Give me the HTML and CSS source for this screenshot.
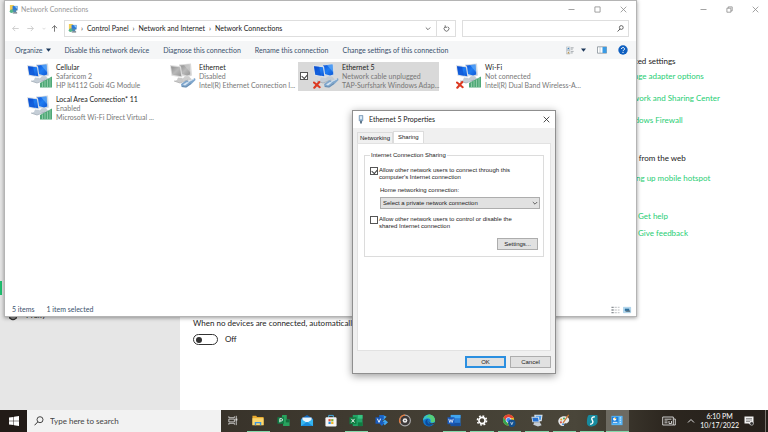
FILE: index.html
```html
<!DOCTYPE html>
<html lang="en">
<head>
<meta charset="utf-8">
<title>Network Connections</title>
<link rel="stylesheet" href="styles.css">
</head>
<body>
<svg class="defs" aria-hidden="true">
  <defs>
    <linearGradient id="screen" x1="0" y1="0" x2="1" y2="1">
      <stop offset="0" stop-color="#0a50d8"/><stop offset=".5" stop-color="#1f7df2"/><stop offset="1" stop-color="#1059d6"/>
    </linearGradient>
    <linearGradient id="screen-off" x1="0" y1="0" x2="1" y2="1">
      <stop offset="0" stop-color="#8d8d8d"/><stop offset=".5" stop-color="#b9b9b9"/><stop offset="1" stop-color="#969696"/>
    </linearGradient>
    <symbol id="pcs" viewBox="0 0 26 26">
      <path d="M9 2l12-1 1 12-5 2-8-3z" fill="#d3dbe3"/>
      <path d="M10 3l9.500-1 .8 10-3.300 1-7-2z" fill="url(#screen)"/>
      <path d="M14 2.600l5.500-.6.8 8z" fill="#6fb4f8" opacity=".6"/>
      <path d="M15 14l4 0 3 3-7 2-4-2z" fill="#c3ccd4"/>
      <path d="M0 2.500l11 1.300 1.500 11.200-11-1.800z" fill="#dbe2e9"/>
      <path d="M1 3.700l9 1 1.300 9-9-1.500z" fill="url(#screen)"/>
      <path d="M1 3.700l5 .6 2 9-5.700-1z" fill="#0846c8" opacity=".5"/>
      <path d="M8 15l4 .5 2 3-4 2-6-2 3-1z" fill="#c5ced7"/>
      <path d="M4 18.500l6 2 8-3" stroke="#9aa5b0" stroke-width=".7" fill="none"/>
    </symbol>
    <symbol id="pcs-off" viewBox="0 0 26 26">
      <path d="M9 2l12-1 1 12-5 2-8-3z" fill="#dadada"/>
      <path d="M10 3l9.500-1 .8 10-3.300 1-7-2z" fill="url(#screen-off)"/>
      <path d="M14 2.600l5.500-.6.8 8z" fill="#d2d2d2" opacity=".6"/>
      <path d="M15 14l4 0 3 3-7 2-4-2z" fill="#cecece"/>
      <path d="M0 2.500l11 1.300 1.500 11.200-11-1.800z" fill="#dedede"/>
      <path d="M1 3.700l9 1 1.300 9-9-1.500z" fill="url(#screen-off)"/>
      <path d="M8 15l4 .5 2 3-4 2-6-2 3-1z" fill="#c9c9c9"/>
      <path d="M4 18.500l6 2 8-3" stroke="#a8a8a8" stroke-width=".7" fill="none"/>
    </symbol>
    <symbol id="bars" viewBox="0 0 26 26">
      <path d="M13 25v-4.500l12-6.500v11z" fill="#4fa877"/>
      <path d="M15.500 24.500v-4.500M18 24.500v-6M20.500 24.500v-7.500M23 24.500v-9" stroke="#b5e2c8" stroke-width=".6"/>
    </symbol>
    <symbol id="plug" viewBox="0 0 26 26">
      <path d="M11 21.500l5-3.500 4 .5 5-3 .5 2-4 4-5 3.500-5-.5z" fill="#7fa6cc"/>
      <path d="M13 22l4-2.500 2 .5-4 3z" fill="#d5e4f2"/>
      <path d="M18 19.500l6-3" stroke="#d2e2f0" stroke-width="1"/>
      <path d="M12 24l4 .5 5-3.500" stroke="#5b7c9c" stroke-width=".6" fill="none"/>
    </symbol>
    <symbol id="cross" viewBox="0 0 26 26">
      <path d="M1 20l5.700 4.700M6.300 19.500l-5 5.700" stroke="#dc3a22" stroke-width="2.100" stroke-linecap="round"/>
    </symbol>
    <symbol id="net-folder" viewBox="0 0 10 10">
      <path d="M1 0h4l1 1h3v5H1z" fill="#f0cc55"/>
      <path d="M4 1h5.500v5H4z" fill="#2a78d8"/><path d="M6 1.500h3v3z" fill="#96cbf5"/>
      <path d="M3 5h5v3H3z" fill="#4b89b4"/>
      <circle cx="2.800" cy="7" r="2" fill="#57b58a"/><path d="M5 8h4v1.500H4z" fill="#66757f"/>
    </symbol>
    <symbol id="x" viewBox="0 0 7 7"><path d="M.7.7l5.600 5.600M6.300.7L.7 6.300" stroke="currentColor" stroke-width=".8"/></symbol>
    <symbol id="min" viewBox="0 0 7 7"><path d="M.5 3.500h6" stroke="currentColor" stroke-width=".8"/></symbol>
    <symbol id="max" viewBox="0 0 7 7"><path d="M.9.9h5.200v5.200H.9z" fill="none" stroke="currentColor" stroke-width=".8"/></symbol>
    <symbol id="restore" viewBox="0 0 7 7"><path d="M.9 2.200h4v4h-4zM2.200 2.200V.9h4v4H4.900" fill="none" stroke="currentColor" stroke-width=".8"/></symbol>
    <symbol id="down" viewBox="0 0 6 6"><path d="M.8 2l2.200 2.200L5.200 2" fill="none" stroke="currentColor" stroke-width=".9"/></symbol>
    <symbol id="left" viewBox="0 0 7 7"><path d="M6.700 3.500H.7M3.200.9L.7 3.500l2.500 2.600" fill="none" stroke="currentColor" stroke-width=".8"/></symbol>
  </defs>
</svg>

<div class="desktop">
  <div class="workspace">
    <section class="settings" aria-label="Settings">
      <nav class="settings-nav">
        <span class="accent"></span>
        <a href="#" class="proxy"><svg viewBox="0 0 10 10"><circle cx="5" cy="5" r="3.600" fill="none" stroke="#333" stroke-width="1.200"/><path d="M1 7h8" stroke="#333"/></svg>Proxy</a>
      </nav>
      <main class="settings-main">
        <label for="auto-off">When no devices are connected, automatically turn off mobile hotspot</label>
        <div class="toggle-row"><input type="checkbox" id="auto-off" class="toggle"><span>Off</span></div>
      </main>
      <aside class="related">
        <div class="controls settings-controls">
          <button aria-label="Minimize"><svg><use href="#min"/></svg></button>
          <button aria-label="Restore"><svg><use href="#restore"/></svg></button>
          <button aria-label="Close"><svg><use href="#x"/></svg></button>
        </div>
        <h2>Related settings</h2>
        <a href="#">Change adapter options</a>
        <a href="#">Network and Sharing Center</a>
        <a href="#">Windows Firewall</a>
        <h2 class="web">Help from the web</h2>
        <a href="#" class="hotspot">Setting up mobile hotspot</a>
        <a href="#" class="help">Get help</a>
        <a href="#" class="help feedback">Give feedback</a>
      </aside>
    </section>

    <section class="explorer" aria-label="Network Connections">
      <header class="titlebar">
        <svg class="app-icon"><use href="#net-folder"/></svg>
        <h1>Network Connections</h1>
        <div class="controls">
          <button aria-label="Minimize"><svg><use href="#min"/></svg></button>
          <button aria-label="Maximize"><svg><use href="#max"/></svg></button>
          <button aria-label="Close"><svg><use href="#x"/></svg></button>
        </div>
      </header>
      <div class="address-row">
        <div class="history">
          <button aria-label="Back"><svg><use href="#left"/></svg></button>
          <button aria-label="Forward"><svg class="flip"><use href="#left"/></svg></button>
          <button aria-label="Recent" class="recent"><svg><use href="#down"/></svg></button>
          <button aria-label="Up" class="up"><svg class="turn"><use href="#left"/></svg></button>
        </div>
        <div class="address">
          <svg class="app-icon"><use href="#net-folder"/></svg>
          <i>›</i><a href="#">Control Panel</a><i>›</i><a href="#">Network and Internet</a><i>›</i><a href="#">Network Connections</a>
          <button class="drop" aria-label="Previous locations"><svg><use href="#down"/></svg></button>
          <button class="refresh" aria-label="Refresh"><svg viewBox="0 0 7 7"><path d="M4.800 1.700a2.400 2.400 0 1 1-2.700.1M2.200.3v2h2" fill="none" stroke="#555" stroke-width=".8"/></svg></button>
        </div>
        <div class="search">
          <input type="search" aria-label="Search Network Connections">
          <svg viewBox="0 0 7 7"><circle cx="4.300" cy="2.500" r="1.900" fill="none" stroke="#444" stroke-width=".8"/><path d="M3 4L.6 6.500" stroke="#444" stroke-width=".9"/></svg>
        </div>
      </div>
      <div class="toolbar">
        <button>Organize <svg class="caret" viewBox="0 0 5 4"><path d="M0 .5h5L2.500 3.700z" fill="#1e395b"/></svg></button>
        <button>Disable this network device</button>
        <button>Diagnose this connection</button>
        <button>Rename this connection</button>
        <button>Change settings of this connection</button>
        <div class="view-tools">
          <button aria-label="Change your view"><svg class="view" viewBox="0 0 10 9"><path d="M.5.500h4v3.700h-4zM.5 4.700h4v3.700h-4z" fill="#e9edf0" stroke="#a3a9ae" stroke-width=".5"/><path d="M1 3l2-1.700 1 1.700z" fill="#3f7fb5"/><path d="M1.500 7.700l1-2 1.500 2z" fill="#b88a3e"/><path d="M5.500 1.500h3M5.500 3h2M5.500 5.500h3M5.500 7.200h2" stroke="#7b8389" stroke-width=".7"/></svg><svg class="caret" viewBox="0 0 5 4"><path d="M0 .5h5L2.500 3.700z" fill="#1e395b"/></svg></button>
          <button aria-label="Preview pane"><svg class="pane" viewBox="0 0 10 8"><path d="M.5.800h9v6.400h-9z" fill="#fff" stroke="#77828b" stroke-width=".7"/><path d="M5.500 1h4v6h-4z" fill="#3a9be5"/><path d="M3 1v6" stroke="#9eb0bd" stroke-width=".6"/></svg></button>
          <button aria-label="Help"><svg class="helpmark" viewBox="0 0 10 10"><circle cx="5" cy="5" r="4.700" fill="#0e5fc0"/><path d="M3.500 4a1.500 1.400 0 1 1 2.300 1.100Q5 5.500 5 6.200M5 7v1" fill="none" stroke="#fff"/></svg></button>
        </div>
      </div>
      <div class="tiles">
        <article class="tile"><svg class="net"><use href="#pcs"/><use href="#bars"/></svg><div><b>Cellular</b><span>Safaricom 2</span><span>HP lt4112 Gobi 4G Module</span></div></article>
        <article class="tile"><svg class="net"><use href="#pcs-off"/><use href="#plug"/></svg><div><b>Ethernet</b><span>Disabled</span><span>Intel(R) Ethernet Connection I...</span></div></article>
        <article class="tile selected"><input type="checkbox" class="box pick" aria-label="Select Ethernet 5" checked><svg class="net"><use href="#pcs"/><use href="#plug"/><use href="#cross"/></svg><div><b>Ethernet 5</b><span>Network cable unplugged</span><span>TAP-Surfshark Windows Adap...</span></div></article>
        <article class="tile"><svg class="net"><use href="#pcs"/><use href="#bars"/><use href="#cross"/></svg><div><b>Wi-Fi</b><span>Not connected</span><span>Intel(R) Dual Band Wireless-A...</span></div></article>
        <article class="tile"><svg class="net"><use href="#pcs"/><use href="#bars"/></svg><div><b>Local Area Connection* 11</b><span>Enabled</span><span>Microsoft Wi-Fi Direct Virtual ...</span></div></article>
      </div>
      <footer class="status">
        <span>5 items</span><span>1 item selected</span>
        <div class="layouts">
          <svg viewBox="0 0 10 8"><path d="M.5 1h2.500M.5 4h2.500M.5 7h2.500" stroke="#8d9296" stroke-width="1.400"/><path d="M4 1h2.500M4 4h2.500M4 7h2.500M7.500 1H9.500M7.500 4H9.500M7.500 7H9.500" stroke="#a4a9ad" stroke-width=".8"/></svg>
          <svg viewBox="0 0 10 8"><path d="M.5 1h8v6h-8z" fill="#b9dcf2" stroke="#8cbfde" stroke-width=".6"/><path d="M2 2.500h5v2.500H2z" fill="#2b6f9e"/><path d="M5 4.500h3V6H2z" fill="#52636e"/></svg>
        </div>
      </footer>
    </section>

    <section class="dialog" role="dialog" aria-label="Ethernet 5 Properties">
      <header class="dialog-title">
        <svg viewBox="0 0 6 10"><path d="M1 .5h4v6H1z" fill="#9fc0dc" stroke="#56789a" stroke-width=".6"/><path d="M2 1.500h2v3H2z" fill="#e5f1fa"/><path d="M2 6.500h2v3H2z" fill="#526b80"/></svg>
        <h1>Ethernet 5 Properties</h1>
        <button aria-label="Close"><svg><use href="#x"/></svg></button>
      </header>
      <div class="tabs" role="tablist">
        <button role="tab">Networking</button><button role="tab" class="active" aria-selected="true">Sharing</button>
      </div>
      <div class="panel">
        <fieldset>
          <legend>Internet Connection Sharing</legend>
          <div class="option"><input type="checkbox" class="box" id="share" checked><label for="share">Allow other network users to connect through this<br>computer's Internet connection</label></div>
          <label class="home" for="home">Home networking connection:</label>
          <div class="select"><select id="home"><option>Select a private network connection</option></select><svg><use href="#down"/></svg></div>
          <div class="option"><input type="checkbox" class="box" id="control"><label for="control">Allow other network users to control or disable the<br>shared Internet connection</label></div>
          <button class="btn more">Settings...</button>
        </fieldset>
      </div>
      <div class="actions"><button class="btn default">OK</button><button class="btn">Cancel</button></div>
    </section>
  </div>

  <footer class="taskbar">
    <button class="start" aria-label="Start"><svg viewBox="0 0 10 10"><path d="M0 1.500l4.500-.6v3.800H0zM5 .8L10 0v4.700H5zM0 5.200h4.500V9L0 8.400zM5 5.200h5V10l-5-.8z" fill="#fff"/></svg></button>
    <label class="finder"><svg viewBox="0 0 10 10"><circle cx="6" cy="3.700" r="3" fill="none" stroke="#333" stroke-width=".9"/><path d="M3.800 5.900L.5 9.300" stroke="#333"/></svg><input type="text" placeholder="Type here to search" aria-label="Type here to search"></label>
    <div class="apps">
      <button aria-label="Task View"><svg viewBox="0 0 14 14"><path d="M2.500 2.500V4h6V2.500M2.500 5.500h6v3h-6zM2.500 11.500V10h6v1.500M10.500 2v10" fill="none" stroke="#ddd" stroke-width=".9"/><path d="M9.700 5h2v2h-2z" fill="#ddd"/></svg></button>
      <button class="open" aria-label="File Explorer"><svg viewBox="0 0 14 14"><path d="M1 2h4l1 1.300h7V12H1z" fill="#e8a92f"/><path d="M1 4.500h12V12H1z" fill="#fbd66d"/><path d="M3.500 12V8.500h7V12H9V10H5v2z" fill="#3d94dc"/></svg></button>
      <button aria-label="Project"><svg viewBox="0 0 14 14"><path d="M5 1h5v5h3v7H6V9H4z" fill="#28a25e"/><path d="M9 6h4v3H9z" fill="#156b3c"/><path d="M0 3.500h7v7H0z" fill="#117c45"/><path d="M2.500 9V5h1.700a1.200 1.200 0 0 1 0 2.500H2.500" fill="none" stroke="#fff" stroke-width=".9"/></svg></button>
      <button aria-label="Mail"><svg viewBox="0 0 14 14"><path d="M.5 5L7 1l6.500 4v8H.5z" fill="#1269bd"/><path d="M2 3.800h10V9H2z" fill="#e5f5ff"/><path d="M.5 5.500L7 9.500l6.500-4V13H.5z" fill="#35b5ef"/><path d="M.5 13L7 8.500l6.500 4.500z" fill="#188bdc"/></svg></button>
      <button aria-label="Microsoft Store"><svg viewBox="0 0 14 14"><path d="M4.500 4V1.500h5V4" fill="none" stroke="#48b4ed"/><rect x="1" y="3.500" width="12" height="10" rx="1.300" fill="#f5f5f5"/><path d="M4.300 5.500h2.400v2.400H4.300z" fill="#e84a32"/><path d="M7.200 5.500h2.400v2.400H7.200z" fill="#79b532"/><path d="M4.300 8.400h2.400v2.400H4.300z" fill="#2a94e5"/><path d="M7.200 8.400h2.400v2.400H7.200z" fill="#f6b520"/></svg></button>
      <button class="open" aria-label="Excel"><svg viewBox="0 0 14 14"><path d="M3.500 1H14v12H3.500z" fill="#21a366"/><path d="M9 1h5v4H9z" fill="#37c481"/><path d="M9 9h5v4H9z" fill="#107c41"/><path d="M0 3.500h7.500v7.500H0z" fill="#107c41"/><path d="M2 5.200l3.500 4M5.500 5.200L2 9.200" stroke="#fff"/></svg></button>
      <button aria-label="Visio"><svg viewBox="0 0 14 14"><path d="M8 1l4 2-4 4-3-3zM10 6l3.500 3-3.500 3-3-3z" fill="#41a5ed"/><path d="M4 1h5v5H4zM6 8l4 1-3 4-3-3z" fill="#1b66c8"/><path d="M0 3.500h7.500v7H0z" fill="#185abd"/><path d="M2 5l1.800 4L5.500 5" fill="none" stroke="#fff"/></svg></button>
      <button aria-label="Music"><svg viewBox="0 0 14 14"><circle cx="7" cy="7" r="5.800" fill="#3b3838" stroke="#aaa" stroke-width="1.200"/><path d="M7 1.200A5.800 5.800 0 0 0 2 10" fill="none" stroke="#e2793c" stroke-width="1.200"/><circle cx="7" cy="7" r="2.500" fill="#eee"/><circle cx="7" cy="7" r=".8" fill="#444"/></svg></button>
      <button aria-label="Edge"><svg viewBox="0 0 14 14"><circle cx="7" cy="7" r="6.500" fill="#1379ce"/><path d="M.5 7A6.500 6.500 0 0 1 13.500 7c0 2.500-4 3-5 1.500C10 5 5 3 .5 7z" fill="#38c4c5"/><path d="M7 .5c4 0 6.500 3 6.500 6.500 0 2-3 2.500-4.500 1.500C10 5 8 3 4 3.500z" fill="#56cf77"/><path d="M6 5.500C4 8 6 12 11 11c-3 3-8 2-8-2 0-2 1.500-3.200 3-3.500z" fill="#0c4a9c"/><path d="M7 6c-1 1.500 0 4 3 4.300l3-1-.7 1.600C8 12 5.500 9 7 6z" fill="#3d3930"/></svg></button>
      <button class="open" aria-label="Word"><svg viewBox="0 0 14 14"><path d="M3.500 1H14v12H3.500z" fill="#2b7cd3"/><path d="M3.500 1H14v3.500H3.500z" fill="#41a5ee"/><path d="M3.500 9.500H14V13H3.500z" fill="#174f9e"/><path d="M0 3.500h7.500v7.500H0z" fill="#185abd"/><path d="M1.300 5.200l1.200 4L3.700 6l1.300 3.200 1.200-4" fill="none" stroke="#fff" stroke-width=".8"/></svg></button>
      <button class="open" aria-label="Settings"><svg viewBox="0 0 14 14"><circle cx="7" cy="7" r="3.300" fill="none" stroke="#fff" stroke-width="1.800"/><circle cx="7" cy="7" r="4.900" fill="none" stroke="#fff" stroke-width="1.700" stroke-dasharray="1.920 1.920"/></svg></button>
      <button class="open" aria-label="Chrome"><svg viewBox="0 0 14 14"><circle cx="6.500" cy="6.500" r="6" fill="#f5c52c"/><path d="M1.200 3.700A6 6 0 0 1 12 4.200H6.500L4 8z" fill="#e54335"/><path d="M1.200 3.700L5 9l1.500 3.500A6 6 0 0 1 1.200 3.700z" fill="#34a353"/><circle cx="6.500" cy="6.500" r="2.700" fill="#4285f4" stroke="#fff" stroke-width=".7"/><circle cx="10" cy="10" r="4" fill="#12508f"/><path d="M8.700 8.500L10 11.500l1.300-3" fill="none" stroke="#fff" stroke-width=".7"/></svg></button>
      <button class="open" aria-label="Network"><svg viewBox="0 0 14 14"><path d="M4 .8h9l-1 7H5z" fill="#dce6ef"/><path d="M5.500 2h6.200l-.7 4.500H6z" fill="#4898e8"/><path d="M1 3h8l1 6H2z" fill="#d0dde8"/><path d="M2 4h6l.8 4H2.800z" fill="#2670cf"/><path d="M4 9h6l2 3-4 1.500-5-2z" fill="#c5ced6"/></svg></button>
      <button class="open" aria-label="Paint"><svg viewBox="0 0 14 14"><path d="M1 9C0 5 4 2 8 2.500s6 4 3.500 6.500-3 0-4 1.500.5 2.500-2 2.500S1.500 11 1 9z" fill="#e7e9eb"/><circle cx="4" cy="6" r="1.100" fill="#e9a42b"/><circle cx="7" cy="4.800" r="1.100" fill="#41a75c"/><circle cx="3.700" cy="9" r="1.100" fill="#d44b42"/><circle cx="6" cy="11" r="1" fill="#377fd1"/><path d="M6 9.500L12 1" stroke="#cf7833" stroke-width="1.300"/></svg></button>
      <button class="open" aria-label="Surfshark"><svg viewBox="0 0 14 14"><path d="M4 1h8q1 0 1 1v6c0 4-5 5.500-7 5.500-3 0-4.500-1.500-4.500-4C1.500 6 2 1 4 1z" fill="#178a9e"/><path d="M10 3C6.500 3 6 5 7.500 7S7 11 5 11" fill="none" stroke="#fff" stroke-width="1.500"/></svg></button>
      <button class="open current" aria-label="Control Panel"><svg viewBox="0 0 14 14"><path d="M1 2h12v10H1z" fill="#58b6f6"/><path d="M1.500 3h7v7h-7z" fill="#1c7fdd"/><circle cx="4.500" cy="5.500" r="1.800" fill="#fff"/><path d="M4.500 5.500V3.700a1.800 1.800 0 0 1 1.800 1.800z" fill="#f8b62b"/><path d="M2.500 9h5" stroke="#fff"/><path d="M10.500 3.500v7" stroke="#dff2ff" stroke-dasharray="1.500 1"/></svg></button>
    </div>
    <div class="tray">
      <button aria-label="Touch keyboard"><svg class="keys" viewBox="0 0 14 10"><path d="M.7 1h10.600v8H.7zM11.300 3h2v6h-2" fill="none" stroke="#ddd" stroke-width=".9"/><path d="M2.500 3.200h7M2.500 6.800h3M7 5v2.500h2.500V5M2.500 5h3" stroke="#ddd" stroke-width=".9" fill="none"/></svg></button>
      <button aria-label="Show hidden icons"><svg class="chev" viewBox="0 0 8 6"><path d="M1 4.500l3-3 3 3" fill="none" stroke="#ddd"/></svg></button>
      <time datetime="2022-10-17T18:10"><span>6:10 PM</span><span>10/17/2022</span></time>
      <button aria-label="Notifications"><svg class="note" viewBox="0 0 10 10"><path d="M.5.500h9v7H7V9L4.500 7.500h-4z" fill="#f1f1f1"/><path d="M2 2.500h6M2 4h6M2 5.500h4" stroke="#555" stroke-width=".6"/><circle cx="7.700" cy="7.500" r="1.800" fill="#333" stroke="#ddd" stroke-width=".6"/></svg></button>
      <span class="peek"></span>
    </div>
  </footer>
</div>
</body>
</html>
```

FILE: styles.css
```css
* { box-sizing: border-box; }
body { margin: 0; font: 7px/9px Lato, "Open Sans", sans-serif; color: #222; }
button, input, select { font: inherit; color: inherit; }
button { display: flex; align-items: center; justify-content: center; margin: 0; padding: 0; border: 0; background: none; white-space: nowrap; }
a { color: inherit; text-decoration: none; }
h1, h2 { margin: 0; font-size: inherit; font-weight: 400; }
svg { display: block; flex: none; width: 7px; height: 7px; }
.defs { position: absolute; width: 0; height: 0; }
.desktop { display: grid; grid-template-rows: 1fr 22px; height: 100vh; overflow: hidden; }
.workspace { position: relative; overflow: hidden; }

/* Settings window at the back */
.settings { display: grid; grid-template-columns: 180px 1fr 148px; height: 100%; background: #fff; font: 8px/11px Lato, sans-serif; }
.settings-nav { padding-top: 281px; background: #e6e6e6; }
.accent { display: block; width: 2px; height: 14px; background: #1fc070; }
.proxy { display: flex; align-items: center; gap: 8px; margin-top: 15px; padding-left: 8px; }
.proxy svg { width: 10px; height: 10px; }
.settings-main { padding: 318px 0 0 13px; white-space: nowrap; }
.toggle-row { display: flex; align-items: center; gap: 7px; margin-top: 5px; }
.toggle { appearance: none; display: flex; align-items: center; width: 25px; height: 11px; margin: 0; padding-left: 2px; border: 1px solid #333; border-radius: 6px; }
.toggle::before { content: ""; width: 6px; height: 6px; border-radius: 50%; background: #333; }
.related { display: flex; flex-direction: column; white-space: nowrap; }
.related a { margin-bottom: 11px; color: #1fce74; }
.related h2 { margin: 38px 0 4px; }
.related h2.web { margin: 16px 0 9px; }
.related .hotspot { margin-bottom: 27px; }
.related .help { margin-bottom: 6px; padding-left: 18px; }
.controls { display: flex; color: #8c8c8c; }
.controls button { width: 26px; height: 18px; }
.settings-controls { align-self: flex-end; }

/* Explorer window */
.explorer { position: absolute; top: 0; left: 4px; display: flex; flex-direction: column; width: 633px; height: 317px; border: 1px solid #b4b4b4; background: #fff; box-shadow: 0 1px 4px #0006; }
.titlebar { display: flex; align-items: center; height: 17px; padding-left: 4px; color: #999; }
.titlebar h1 { margin: 0 auto 0 3px; }
.app-icon { width: 9px; height: 9px; }
.address-row { display: flex; gap: 6px; margin: 2px 7px 4px 0; height: 17px; }
.history { display: flex; align-items: center; width: 53px; padding-left: 6px; color: #c5c5c5; }
.history button { width: 17px; justify-content: start; padding-left: 1px; }
.history .recent { width: 12px; }
.history .recent svg { width: 4px; }
.history .up { width: 7px; padding: 0; color: #555; }
.flip { transform: scaleX(-1); }
.turn { transform: rotate(90deg); }
.address { display: flex; align-items: center; width: 392px; padding-left: 3px; border: 1px solid #dedede; color: #222; }
.address i { width: 10px; text-align: center; font-style: normal; }
.address .drop { width: 18px; height: 100%; margin-left: auto; border-right: 1px solid #dedede; color: #666; }
.address .refresh { width: 18px; height: 100%; }
.address .drop svg { width: 6px; }
.search { display: flex; flex: 1; align-items: center; padding-right: 4px; border: 1px solid #dedede; }
.search input { flex: 1; min-width: 0; height: 100%; padding: 0 4px; border: 0; background: none; outline: 0; appearance: none; }
.toolbar { display: flex; align-items: center; gap: 14px; height: 18px; padding: 0 8px 0 10px; background: #f5f6f7; color: #39506c; }
.caret { width: 5px; height: 4px; margin-left: 3px; }
.view-tools { display: flex; gap: 11px; margin-left: auto; }
.view-tools .view { width: 9px; height: 9px; }
.view-tools .caret { margin-left: 6px; }
.pane { width: 10px; height: 8px; }
.helpmark { width: 10px; height: 10px; }
.tiles { display: grid; flex: 1; grid-template-columns: repeat(4, 141px); grid-auto-rows: 29px; align-content: start; gap: 3px 2px; padding: 3px 7px; }
.tile { position: relative; display: flex; gap: 3px; padding-left: 15px; color: #777; }
.tile > div { padding-top: 1px; }
.tile b, .tile span { display: block; font-weight: 400; white-space: nowrap; }
.tile b { color: #222; }
.tile.selected { background: #d9d9d9; }
.net { width: 26px; height: 27px; }
.box { appearance: none; flex: none; display: flex; width: 8px; height: 8px; margin: 0; border: 1px solid #555; background: #fff; }
.box:checked::before { content: ""; width: 5px; height: 3px; margin: 1px 0 0 1px; border: solid #444; border-width: 0 0 1px 1px; transform: rotate(-48deg); }
.pick { position: absolute; left: 2px; top: 10px; }
.status { display: flex; align-items: center; height: 13px; padding: 0 4px 0 7px; gap: 12px; color: #39506c; }
.layouts { display: flex; gap: 3px; margin-left: auto; }
.layouts svg { width: 9px; height: 8px; }

/* Properties dialog */
.dialog { position: absolute; left: 352px; top: 110px; display: flex; flex-direction: column; width: 204px; height: 264px; border: 1px solid #8f8f8f; background: #f0f0f0; box-shadow: 0 2px 8px #0006; font: 6px/7px "Liberation Sans", Arial, sans-serif; }
.dialog-title { display: flex; align-items: center; height: 17px; padding: 0 5px; background: #fff; font: 7px/9px Lato, sans-serif; }
.dialog-title > svg { width: 6px; height: 9px; }
.dialog-title h1 { margin: 0 auto 0 5px; }
.tabs { display: flex; align-items: flex-end; height: 15px; padding: 0 4px; }
.tabs button { height: 11px; padding: 0 2px; border: 1px solid #dcdcdc; border-bottom: 0; }
.tabs .active { height: 12px; padding: 0 4px; background: #fff; }
.panel { flex: 1; margin: 0 4px; padding: 8px 6px; border: 1px solid #e2e2e2; background: #fff; }
fieldset { min-width: 0; margin: 0; padding: 8px 3px 6px 5px; border: 1px solid #dcdcdc; }
legend { margin-left: 0; padding: 0 1px; }
.option { display: flex; gap: 1px; white-space: nowrap; }
.home { display: block; margin: 6px 0 3px 10px; }
.select { position: relative; margin: 0 0 7px 10px; }
.select select { display: block; appearance: none; width: 100%; height: 12px; padding: 0 2px; border: 1px solid #adadad; border-radius: 0; background: #e1e1e1; }
.select svg { position: absolute; right: 2px; top: 3px; width: 6px; height: 6px; color: #555; }
.btn { width: 41px; height: 12px; border: 1px solid #adadad; background: #e1e1e1; }
.more { margin: 8px 2px 0 auto; }
.actions { display: flex; justify-content: flex-end; gap: 4px; padding: 5px 4px; }
.btn.default { outline: 1px solid #2b8fe0; outline-offset: -2px; border-color: #2b8fe0; }

/* Taskbar */
.taskbar { display: flex; z-index: 1; background: linear-gradient(90deg, #2c261f, #3f3a30 45%, #4a463a 75%, #2c261f 87%, #241f1a); color: #fff; }
.start { width: 27px; background: #221b17; }
.start svg { width: 10px; height: 10px; }
.finder { display: flex; align-items: center; gap: 6px; width: 194px; padding-left: 7px; background: #f2f2f2; }
.finder svg { width: 10px; height: 10px; }
.finder input { width: 150px; height: 16px; padding: 0; border: 0; background: none; color: #444; font: 8px/11px Lato, sans-serif; }
.finder input::placeholder { color: #444; opacity: 1; }
.apps { display: flex; width: 408px; }
.apps button { flex: 1; border-bottom: 1px solid transparent; background-clip: padding-box; }
.apps svg { width: 14px; height: 13px; }
.apps .open { margin: 0 2px; border-color: #83d9ab; }
.apps .current { margin: 0; background: #6d6a61; }
.tray { display: flex; flex: 1; align-items: center; justify-content: flex-end; gap: 11px; }
.keys { width: 14px; height: 10px; }
.chev { width: 8px; height: 6px; }
.tray time { display: flex; flex-direction: column; align-items: center; margin: 0 -6px; }
.note { width: 10px; height: 10px; }
.peek { align-self: stretch; width: 3px; border-left: 1px solid #77736d; }
```
